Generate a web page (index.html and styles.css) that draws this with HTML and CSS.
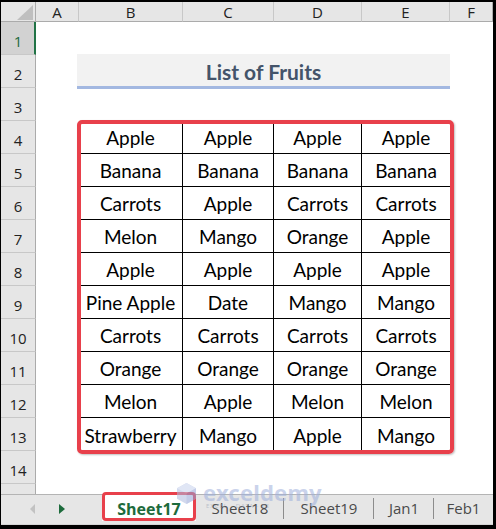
FILE: index.html
```html
<!DOCTYPE html>
<html>
<head>
<meta charset="utf-8">
<link rel="stylesheet" href="styles.css">
</head>
<body>
<div class="frame">
  <div class="colheads">
    <div class="corner"></div>
    <div class="colh w-a">A</div>
    <div class="colh w-b">B</div>
    <div class="colh w-c">C</div>
    <div class="colh w-d">D</div>
    <div class="colh w-e">E</div>
    <div class="colh w-f">F</div>
  </div>
  <div class="body">
    <div class="rowheads">
      <div class="rowh sel">1</div>
      <div class="rowh">2</div>
      <div class="rowh">3</div>
      <div class="rowh">4</div>
      <div class="rowh">5</div>
      <div class="rowh">6</div>
      <div class="rowh">7</div>
      <div class="rowh">8</div>
      <div class="rowh">9</div>
      <div class="rowh">10</div>
      <div class="rowh">11</div>
      <div class="rowh">12</div>
      <div class="rowh">13</div>
      <div class="rowh">14</div>
      <div class="rowh partial"></div>
    </div>
    <div class="cells">
      <div class="title">List of Fruits</div>
      <div class="fruits">
        <div class="c">Apple</div><div class="c">Apple</div><div class="c">Apple</div><div class="c">Apple</div>
        <div class="c">Banana</div><div class="c">Banana</div><div class="c">Banana</div><div class="c">Banana</div>
        <div class="c">Carrots</div><div class="c">Apple</div><div class="c">Carrots</div><div class="c">Carrots</div>
        <div class="c">Melon</div><div class="c">Mango</div><div class="c">Orange</div><div class="c">Apple</div>
        <div class="c">Apple</div><div class="c">Apple</div><div class="c">Apple</div><div class="c">Apple</div>
        <div class="c">Pine Apple</div><div class="c">Date</div><div class="c">Mango</div><div class="c">Mango</div>
        <div class="c">Carrots</div><div class="c">Carrots</div><div class="c">Carrots</div><div class="c">Carrots</div>
        <div class="c">Orange</div><div class="c">Orange</div><div class="c">Orange</div><div class="c">Orange</div>
        <div class="c">Melon</div><div class="c">Apple</div><div class="c">Melon</div><div class="c">Melon</div>
        <div class="c">Strawberry</div><div class="c">Mango</div><div class="c">Apple</div><div class="c">Mango</div>
      </div>
    </div>
  </div>
  <div class="tabbar">
    <div class="nav">
      <span class="arrow left"></span>
      <span class="arrow right"></span>
    </div>
    <div class="tab active">Sheet17</div>
    <div class="tab t18 sep">Sheet18</div>
    <div class="tab t19 sep">Sheet19</div>
    <div class="tab tjan sep">Jan1</div>
    <div class="tab tfeb">Feb1</div>
  </div>
  <div class="watermark">
    <svg class="wm-logo" width="19" height="21" viewBox="0 0 19 21">
      <polygon points="9.5,0 19,5.25 19,15.75 9.5,21 0,15.75 0,5.25" fill="#aebbe0"/>
      <polygon points="9.5,0 19,5.25 9.5,10.5 0,5.25" fill="#c8d2ee"/>
      <polygon points="9.5,10.5 19,5.25 19,15.75 9.5,21" fill="#93a4d6"/>
    </svg>
    <div class="wm-text">
      <div class="wm-name">exceldemy</div>
      <div class="wm-sub">EXCEL · DATA · BI</div>
    </div>
  </div>
</div>
</body>
</html>
```
FILE: styles.css
```css
* {
  box-sizing: border-box;
  margin: 0;
  padding: 0;
}

html, body {
  background: #000;
}

body {
  width: 496px;
  height: 529px;
  padding: 2px 3px 4px 1px;
  overflow: hidden;
}

.frame {
  position: relative;
  width: 492px;
  height: 523px;
  background: #fff;
  display: flex;
  flex-direction: column;
  overflow: hidden;
}

/* column headers */
.colheads {
  display: flex;
  height: 20px;
  flex: none;
}

.corner {
  position: relative;
  width: 35px;
  background: #e6e6e6;
  border-right: 1px solid #ababab;
  border-bottom: 1px solid #ababab;
}

.corner::after {
  content: "";
  position: absolute;
  right: 2px;
  bottom: 1px;
  width: 0;
  height: 0;
  border-left: 16px solid transparent;
  border-bottom: 15px solid #bfbfbf;
}

.colh {
  background: #e6e6e6;
  border-right: 1px solid #c8c8c8;
  border-bottom: 1px solid #ababab;
  display: flex;
  align-items: center;
  justify-content: center;
  font-family: "Open Sans", "Noto Sans", sans-serif;
  font-size: 15px;
  color: #222;
  line-height: 1;
  padding-top: 1px;
}

.w-a { width: 43px; }
.w-b { width: 104px; }
.w-c { width: 91px; }
.w-d { width: 88px; }
.w-e { width: 88px; }
.w-f { width: 43px; border-right-color: #ababab; }

/* body */
.body {
  display: flex;
  flex: none;
  height: 472px;
}

.rowheads {
  display: flex;
  flex-direction: column;
  width: 35px;
  flex: none;
}

.rowh {
  height: 33px;
  flex: none;
  background: #e6e6e6;
  border-right: 1px solid #ababab;
  border-bottom: 1px solid #c8c8c8;
  display: flex;
  justify-content: center;
  align-items: flex-end;
  padding-bottom: 5px;
  font-family: "Open Sans", "Noto Sans", sans-serif;
  font-size: 15px;
  line-height: 1;
  color: #222;
}

.rowh.sel {
  background: #d2d2d2;
  border-right: 2px solid #217346;
  color: #1e6b40;
  padding-left: 1px;
}

.rowh.partial {
  height: 10px;
  border-bottom: none;
}

.cells {
  display: grid;
  grid-template-columns: 43px 104px 91px 88px 88px 43px;
  grid-template-rows: repeat(14, 33px) 10px;
  width: 457px;
}

.title {
  grid-row: 2;
  grid-column: 2 / 6;
  margin: -1px 0 -1px -2px;
  background: #f2f2f2;
  border-bottom: 3px solid #a3b8e1;
  display: flex;
  align-items: center;
  justify-content: center;
  font-family: "Lato", "Liberation Sans", sans-serif;
  font-weight: 700;
  font-size: 21px;
  color: #44546a;
  padding-top: 2px;
}

.fruits {
  grid-row: 4 / 14;
  grid-column: 2 / 6;
  position: relative;
  display: grid;
  grid-template-columns: 104px 91px 88px 88px;
  grid-template-rows: repeat(10, 33px);
}

.fruits::after {
  content: "";
  position: absolute;
  top: -1px;
  left: -2px;
  right: -4px;
  bottom: -3px;
  border: 4px solid #e8404b;
  border-radius: 5px;
  box-shadow: 1px 1px 2px rgba(0, 0, 0, 0.25);
  pointer-events: none;
}

.c {
  border-right: 1px solid #000;
  border-bottom: 1px solid #000;
  display: flex;
  align-items: center;
  justify-content: center;
  font-family: "Lato", "Liberation Sans", sans-serif;
  font-size: 19px;
  color: #000;
  line-height: 1;
  padding-top: 1px;
  white-space: nowrap;
}

.c:nth-child(4n) {
  border-right: none;
}

.c:nth-last-child(-n+4) {
  border-bottom: none;
}

/* tab bar */
.tabbar {
  flex: none;
  height: 31px;
  display: flex;
  background: #e6e6e6;
  border-top: 1px solid #b4b4b4;
  border-bottom: 1px solid #d4d4d4;
  font-family: "Open Sans", "Noto Sans", sans-serif;
  font-size: 15px;
}

.nav {
  width: 101px;
  flex: none;
  position: relative;
}

.arrow {
  position: absolute;
  top: 9px;
  width: 0;
  height: 0;
  border-top: 5px solid transparent;
  border-bottom: 5px solid transparent;
}

.arrow.left {
  left: 29px;
  border-right: 5px solid #c2c2c2;
}

.arrow.right {
  left: 58px;
  border-left: 6px solid #1d6b3c;
}

.tab {
  position: relative;
  flex: none;
  display: flex;
  align-items: center;
  justify-content: center;
  color: #4a4a4a;
  padding-bottom: 3px;
}

.tab.active {
  width: 94px;
  height: 26px;
  background: #fff;
  color: #1d6b3c;
  font-weight: 700;
  font-size: 16px;
  padding-bottom: 0;
  padding-top: 1px;
}

.tab.active::after {
  content: "";
  position: absolute;
  top: -3px;
  left: 0;
  right: 0;
  bottom: 0;
  border: 3px solid #e8404b;
  border-radius: 4px;
}

.t18 { width: 88px; }
.t19 { width: 90px; }
.tjan { width: 60px; }
.tfeb { width: 59px; }

.tab.sep::after {
  content: "";
  position: absolute;
  right: 0;
  top: 3px;
  bottom: 5px;
  width: 1px;
  background: #8c8c8c;
}

/* watermark overlay */
.watermark {
  position: absolute;
  left: 176px;
  top: 479px;
  display: flex;
  align-items: flex-start;
  gap: 7px;
  opacity: 0.55;
  pointer-events: none;
}

.wm-logo {
  margin-top: 2px;
}

.wm-text {
  display: flex;
  flex-direction: column;
}

.wm-name {
  font-family: "Noto Sans", sans-serif;
  font-weight: 700;
  font-size: 22px;
  line-height: 22px;
  color: #9fb0dc;
  letter-spacing: 0.2px;
}

.wm-sub {
  font-family: "Noto Sans", sans-serif;
  font-size: 6px;
  line-height: 7px;
  color: #9aa3b5;
  letter-spacing: 1px;
  padding-left: 3px;
}
```
